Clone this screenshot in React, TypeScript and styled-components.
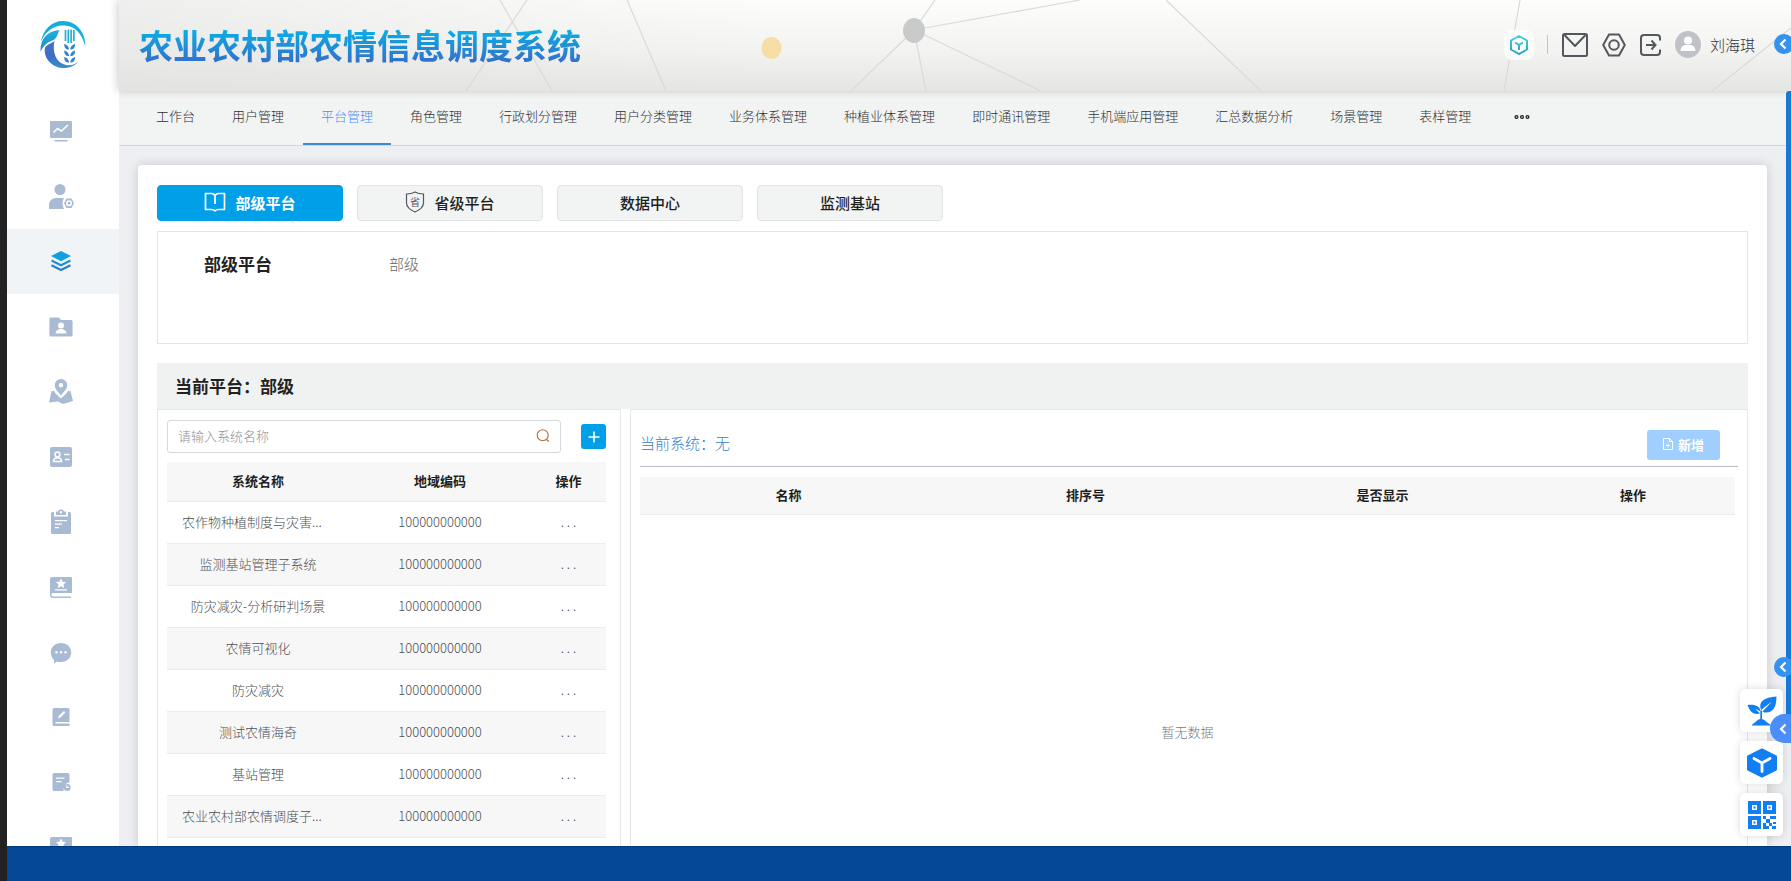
import React from "react";
import styled, { createGlobalStyle, css } from "styled-components";

const GlobalStyle = createGlobalStyle`
  *, *::before, *::after { box-sizing: border-box; }
  body {
    margin: 0;
    font-family: "Noto Sans CJK SC", "Liberation Sans", sans-serif;
    font-size: 13px;
    font-weight: 300;
    color: #303133;
    background: #eeeff2;
  }
  button, input { font-family: inherit; font-size: inherit; font-weight: inherit; }
  button { cursor: pointer; }
`;

const Shell = styled.div`
  position: relative;
  display: flex;
  flex-direction: column;
  height: 100vh;
  overflow: hidden;
  border-left: 7px solid #222;
`;

const Workspace = styled.div`
  display: flex;
  flex: 1;
  min-height: 0;
  overflow: hidden;
`;

const Footer = styled.footer`
  flex: none;
  height: 35px;
  background: #054797;
  border-top: 1px solid #023a80;
`;

/* ---------- sidebar ---------- */

const Sidebar = styled.aside`
  flex: none;
  width: 112px;
  background: #fff;
`;

const LogoBox = styled.div`
  display: flex;
  justify-content: center;
  height: 99px;
  padding-top: 20px;
`;

const SideLink = styled.a<{ $active?: boolean }>`
  display: flex;
  align-items: center;
  justify-content: center;
  height: 65px;
  padding-right: 4px;
  color: #a9bbd3;
  background: ${(p) => (p.$active ? "#f1f4f6" : "transparent")};
`;

/* ---------- header ---------- */

const Main = styled.main`
  display: flex;
  flex-direction: column;
  flex: 1;
  min-width: 0;
`;

const Header = styled.header`
  position: relative;
  display: flex;
  flex: none;
  align-items: center;
  justify-content: space-between;
  height: 91px;
  padding: 0 36px 2px 20px;
  background:
    linear-gradient(90deg, rgba(225, 225, 225, 0.5), rgba(255, 255, 255, 0) 40%),
    linear-gradient(180deg, #fdfdfc, #f3f3f1 55%, #e5e5e3);
  box-shadow: -2px 0 8px rgba(0, 0, 0, 0.18);
`;

const Network = styled.svg`
  position: absolute;
  inset: 0;
  width: 100%;
  height: 100%;
`;

const Title = styled.h1`
  position: relative;
  margin: 0;
  font-size: 34px;
  line-height: 48px;
  font-weight: 700;
  color: transparent;
  background: linear-gradient(180deg, #0cabe4 22%, #3272cc 84%);
  background-clip: text;
  -webkit-background-clip: text;
`;

const Tools = styled.div`
  position: relative;
  display: flex;
  align-items: center;
`;

const IconButton = styled.button`
  display: flex;
  align-items: center;
  justify-content: center;
  padding: 0;
  border: 0;
  background: none;
  color: #54585e;
`;

const CubeButton = styled(IconButton)`
  width: 30px;
  height: 30px;
  border-radius: 8px;
  background: rgba(255, 255, 255, 0.75);
`;

const Divider = styled.span`
  width: 1px;
  height: 19px;
  margin: 0 14px 0 13px;
  background: #c4c4c4;
`;

const ToolGroup = styled.div`
  display: flex;
  align-items: center;
  gap: 14px;
`;

const UserButton = styled(IconButton)`
  gap: 9px;
  font-size: 15px;
  line-height: 24px;
  color: #303133;
`;

/* ---------- navigation ---------- */

const Nav = styled.nav`
  display: flex;
  flex: none;
  gap: 1px;
  height: 55px;
  padding-left: 19px;
  background: #f2f4f4;
  border-bottom: 1px solid #d3d7df;
`;

const NavLink = styled.a<{ $active?: boolean }>`
  padding: 0 18px 2px;
  line-height: 50px;
  white-space: nowrap;
  text-decoration: none;
  color: ${(p) => (p.$active ? "#4a8ff0" : "#303133")};
  border-bottom: 2px solid ${(p) => (p.$active ? "#3c8ad6" : "transparent")};
`;

const MoreButton = styled(IconButton)`
  padding: 0 24px 2px;
  color: #222;
`;

/* ---------- content ---------- */

const Card = styled.section`
  display: flex;
  flex: 1;
  flex-direction: column;
  min-height: 0;
  margin: 19px 24px 0 19px;
  padding: 20px 19px 0;
  background: #fff;
  border-radius: 4px 4px 0 0;
  box-shadow: 0 0 12px rgba(0, 0, 0, 0.16);
`;

const Tabs = styled.div`
  display: flex;
  flex: none;
  gap: 14px;
`;

const TabButton = styled.button<{ $active?: boolean }>`
  display: flex;
  align-items: center;
  justify-content: center;
  gap: 9px;
  width: 186px;
  height: 36px;
  padding: 0 0 2px;
  border: 1px solid #e2e4e5;
  border-radius: 4px;
  font-size: 15px;
  font-weight: 500;
  color: #1d1f21;
  background: #f2f3f3;
  ${(p) =>
    p.$active &&
    css`
      border-color: #00a0e9;
      font-weight: 700;
      color: #fff;
      background: #00a0e9;
    `}
`;

const InfoBox = styled.div`
  display: flex;
  flex: none;
  gap: 117px;
  height: 113px;
  margin-top: 10px;
  padding: 19px 46px;
  line-height: 26px;
  border: 1px solid #e4e6e6;
`;

const InfoLabel = styled.strong`
  font-size: 17px;
  font-weight: 700;
  color: #222;
`;

const InfoValue = styled.span`
  font-size: 15px;
  color: #666;
`;

const SectionTitle = styled.h2`
  flex: none;
  margin: 19px 0 0;
  padding: 0 18px;
  font-size: 17px;
  line-height: 46px;
  font-weight: 700;
  color: #222;
  background: #f0f2f2;
`;

const Columns = styled.div`
  display: flex;
  flex: 1;
  gap: 9px;
  min-height: 0;
`;

const Panel = styled.div`
  border: 1px solid #e4e6e8;
  border-bottom: 0;
`;

const SystemPanel = styled(Panel)`
  flex: none;
  width: 464px;
  padding: 10px 14px 0 9px;
`;

const SearchRow = styled.form`
  display: flex;
  align-items: center;
  gap: 20px;
`;

const SearchField = styled.label`
  display: flex;
  align-items: center;
  width: 395px;
  height: 33px;
  padding: 0 10px 2px;
  border: 1px solid #d5d8de;
  border-radius: 3px;
`;

const SearchInput = styled.input`
  flex: 1;
  min-width: 0;
  padding: 0;
  border: 0;
  outline: 0;
  background: none;
  &::placeholder { color: #8e9197; opacity: 1; }
`;

const AddButton = styled(IconButton)`
  width: 25px;
  height: 25px;
  border-radius: 3px;
  color: #fff;
  background: #00a0e9;
`;

const Table = styled.table`
  width: 100%;
  table-layout: fixed;
  border-collapse: separate;
  border-spacing: 0;
  text-align: center;
`;

const HeadCell = styled.th<{ $height: number }>`
  height: ${(p) => p.$height}px;
  padding: 0 0 2px;
  font-weight: 700;
  color: #1d1f21;
  background: #f7f7f8;
  border-bottom: 1px solid #ebecef;
`;

const SystemTable = styled(Table)`
  margin-top: 9px;
`;

const Row = styled.tr`
  &:nth-child(even) { background: #f7f7f8; }
`;

const Cell = styled.td<{ $truncated?: boolean }>`
  height: 42px;
  padding: 0 15px 2px;
  color: #4c4f53;
  text-align: ${(p) => (p.$truncated ? "left" : "center")};
  white-space: nowrap;
  border-bottom: 1px solid #ebecef;
`;

const RowMenu = styled.button`
  padding: 0;
  border: 0;
  background: none;
  color: #4c4f53;
`;

const DetailPanel = styled(Panel)`
  flex: 1;
  min-width: 0;
  padding: 10px 9px 0;
`;

const DetailHead = styled.div`
  display: flex;
  align-items: center;
  justify-content: space-between;
  height: 47px;
  padding: 4px 18px 0 0;
  border-bottom: 1px solid #b9bdc6;
`;

const DetailTitle = styled.h3`
  margin: 0;
  padding-bottom: 4px;
  font-size: 15px;
  line-height: 24px;
  font-weight: 300;
  color: #2f80c8;
`;

const CreateButton = styled.button`
  display: flex;
  align-items: center;
  justify-content: center;
  gap: 5px;
  width: 73px;
  height: 30px;
  padding: 0 0 2px;
  border: 0;
  border-radius: 3px;
  font-weight: 700;
  color: #fff;
  background: #a0cfff;
`;

const DetailBody = styled.div`
  padding: 10px 3px 0 0;
`;

const Empty = styled.p`
  margin: 0;
  line-height: 434px;
  text-align: center;
  color: #77797e;
`;

/* ---------- floating widgets ---------- */

const ScrollRail = styled.div`
  position: absolute;
  top: 91px;
  right: 0;
  width: 5px;
  height: 640px;
  border-radius: 3px 0 0 0;
  background: #1778d8;
`;

const RoundToggle = styled(IconButton)<{ $top: number }>`
  position: absolute;
  top: ${(p) => p.$top}px;
  right: -3px;
  width: 20px;
  height: 20px;
  padding-right: 2px;
  border-radius: 50%;
  color: #fff;
  background: #3592f0;
`;

const DrawerToggle = styled(IconButton)`
  position: absolute;
  top: 714px;
  right: 0;
  width: 21px;
  height: 29px;
  padding-left: 4px;
  border-radius: 15px 0 0 15px;
  color: #fff;
  background: #4b8dfa;
`;

const FloatStack = styled.div`
  position: absolute;
  top: 689px;
  right: 8px;
  display: flex;
  flex-direction: column;
  gap: 9px;
`;

const FloatButton = styled(IconButton)`
  width: 43px;
  height: 43px;
  border-radius: 5px;
  color: #117ef4;
  background: #fff;
  box-shadow: 0 0 8px rgba(0, 0, 0, 0.14);
`;

/* ---------- drawings ---------- */

const Logo = () => (
  <svg width="48" height="50" viewBox="0 0 48 50" aria-label="农情">
    <defs>
      <linearGradient id="blade" x1="0" y1="0" x2="0" y2="1">
        <stop offset="0" stopColor="#18b2dc" />
        <stop offset="1" stopColor="#2a86cc" />
      </linearGradient>
      <linearGradient id="crescent" x1="0" y1="0" x2="0" y2="1">
        <stop offset="0" stopColor="#3f74cc" />
        <stop offset="0.600" stopColor="#3f6cc4" />
        <stop offset="1" stopColor="#3094cc" />
      </linearGradient>
      <linearGradient id="cube" x1="0" y1="0" x2="0" y2="1">
        <stop offset="0" stopColor="#3fd3e8" />
        <stop offset="1" stopColor="#1e9fc9" />
      </linearGradient>
    </defs>
    <path fill="#12b0da" d="M2 22C4 9 13 1 24 1c13 0 23 11 22.300 26C43 13 36 6 25 5.500 14 5 6 12 2 22z" />
    <path fill="url(#blade)" d="M1.500 32C1 19 8 11 20.500 10c-2 4-2.500 8-6 10C9 21.500 4 26 1.500 32z" />
    <path fill="url(#crescent)" d="M6 27.500c3-4 7-4 9.500-6.500C13 32 17 43 27 45c6 1 10-1 13-4-4 5-10 7.500-17 7C12 47 4 37 6 27.500z" />
    <path stroke="#2badd6" strokeWidth="1.700" d="M26.500 10v11M29.300 9.500V23M32.100 9.500V23M34.900 10v11" />
    <path
      fill="#2f84cc"
      d="M30 29.500c-3.500 0-4.800-2-4.800-5.500 3 1 4.800 2.500 4.800 5.500zM31.300 29.500c3.500 0 4.800-2 4.800-5.500-3 1-4.800 2.500-4.800 5.500zM30 36c-3.500 0-4.800-2-4.800-5.500 3 1 4.800 2.500 4.800 5.500zM31.300 36c3.500 0 4.800-2 4.800-5.500-3 1-4.800 2.500-4.800 5.500zM30 42.500c-3.500 0-4.800-2-4.800-5.500 3 1 4.800 2.500 4.800 5.500zM31.300 42.500c3.500 0 4.800-2 4.800-5.500-3 1-4.800 2.500-4.800 5.500z"
    />
  </svg>
);

const icon = (children: React.ReactNode) => (
  <svg width="26" height="26" viewBox="0 0 26 26" fill="currentColor" aria-hidden="true">
    {children}
  </svg>
);

const bookStar = icon(
  <>
    <path d="M4 3h19a1 1 0 0 1 1 1v15H5a1.700 1.700 0 0 0 0 3.400h18V24H5a3 3 0 0 1-3-3V5a2 2 0 0 1 2-2z" />
    <path fill="#fff" d="m13 4.500 1.600 3.200 3.400.4-2.500 2.400.7 3.400-3.200-1.700-3.200 1.700.7-3.400L8 8.100l3.400-.4zM7 15.200h12v1.300H7z" />
  </>
);

const sideItems = [
  {
    name: "工作台",
    art: icon(
      <>
        <path d="M3 2h20a1 1 0 0 1 1 1v15a1 1 0 0 1-1 1H3a1 1 0 0 1-1-1V3a1 1 0 0 1 1-1zM6.500 21h13v1.500h-13z" />
        <path fill="none" stroke="#fff" strokeWidth="1.600" strokeLinejoin="round" d="m5.500 13.500 4-4 4 2.500 6.500-6" />
      </>
    ),
  },
  {
    name: "用户管理",
    art: icon(
      <>
        <circle cx="12" cy="5.500" r="5.500" />
        <path d="M1 25v-4c0-4 3-7 7-7h8c-2 3-2 7 0 11z" />
        <path fillRule="evenodd" d="M18.500 14.500h5l2.500 4.700-2.500 4.800h-5L16 19.200zM21 16.200a3 3 0 1 0 0 6 3 3 0 0 0 0-6z" />
        <circle cx="21" cy="19.200" r="1.400" />
      </>
    ),
  },
  {
    name: "平台管理",
    active: true,
    art: icon(
      <>
        <path fill="#129fe0" d="m13 2 10 5-10 5.200L3 7z" />
        <path fill="none" stroke="#1d90d2" strokeWidth="2.200" d="m3.500 11.500 9.500 4.800 9.500-4.800" />
        <path fill="none" stroke="#2c7fc4" strokeWidth="2.200" d="m3.500 16.300 9.500 4.800 9.500-4.800" />
      </>
    ),
  },
  {
    name: "角色管理",
    art: icon(
      <>
        <path d="M3 3.500h8l2 2.500h10a1.600 1.600 0 0 1 1.600 1.600V21a1.600 1.600 0 0 1-1.600 1.600H3A1.600 1.600 0 0 1 1.400 21V5A1.500 1.500 0 0 1 3 3.500z" />
        <circle cx="13" cy="11.500" r="3" fill="#fff" />
        <path fill="#fff" d="M7.500 19.500c0-6 11-6 11 0z" />
      </>
    ),
  },
  {
    name: "行政划分管理",
    art: icon(
      <>
        <path fillRule="evenodd" d="M13 0a6.200 6.200 0 0 1 6.200 6.200c0 4.200-4.200 7.300-6.200 10.300-2-3-6.200-6.100-6.200-10.300A6.200 6.200 0 0 1 13 0zm0 4a2.200 2.200 0 1 0 0 4.400A2.200 2.200 0 0 0 13 4z" />
        <path d="M3.500 12H6c1.500 3 4 4.500 7 7.500 3-3 5.500-4.500 7-7.500h2.500L25 22l-10 3-5-2.500L1 23.500z" />
      </>
    ),
  },
  {
    name: "用户分类管理",
    art: icon(
      <>
        <rect x="2" y="3" width="22" height="20" rx="2" />
        <g fill="none" stroke="#fff" strokeWidth="1.500">
          <circle cx="9.500" cy="10.500" r="2.400" />
          <path d="M5.500 17.500c0-5 8-5 8 0zM16 10.500h5.500M17 15.500h4.500" />
        </g>
      </>
    ),
  },
  {
    name: "业务体系管理",
    art: icon(
      <>
        <path d="M4.500 3H6v4.500h14V3h1.500A1.500 1.500 0 0 1 23 4.500v19a1.500 1.500 0 0 1-1.500 1.500h-17A1.500 1.500 0 0 1 3 23.500v-19A1.500 1.500 0 0 1 4.500 3z" />
        <path fillRule="evenodd" d="M8 2.500h2c.5-1.500 1.500-2 3-2s2.500.5 3 2h2V6H8zM13 2a1.200 1.200 0 1 0 0 2.400A1.200 1.200 0 0 0 13 2z" />
        <path fill="#fff" d="M7 11h12v1.200H7zM7 14.500h7v1.200H7zM7 18h4v1.200H7z" />
      </>
    ),
  },
  { name: "种植业体系管理", art: bookStar },
  {
    name: "即时通讯管理",
    art: icon(
      <>
        <path d="M13 4c6 0 10.200 4 10.200 9.500S19 23 13 23c-1.500 0-3 0-4-.5L6 24.500V21C4 19.500 2.800 16.500 2.800 13.500 2.800 8 7 4 13 4z" />
        <g fill="#fff">
          <circle cx="8.500" cy="13.200" r="1.200" />
          <circle cx="13" cy="13.200" r="1.200" />
          <circle cx="17.500" cy="13.200" r="1.200" />
        </g>
      </>
    ),
  },
  {
    name: "手机端应用管理",
    art: icon(
      <>
        <path d="M6 4h14a1.500 1.500 0 0 1 1.500 1.500V18H7.500v1.500h14V22H6a1.500 1.500 0 0 1-1.500-1.500v-15A1.500 1.500 0 0 1 6 4z" />
        <path fill="#fff" d="m10 14.500 1-3 5-4.500 1.200 1.500-4.700 5z" />
      </>
    ),
  },
  {
    name: "汇总数据分析",
    art: icon(
      <>
        <path d="M6 4h14a1.500 1.500 0 0 1 1.500 1.500v8c-4 0-6 4-6 8.500H6a1.500 1.500 0 0 1-1.500-1.500v-15A1.500 1.500 0 0 1 6 4z" />
        <path fill="#fff" d="M8 8.500h8.500v1.300H8zM8 12h5.500v1.300H8z" />
        <path fillRule="evenodd" d="M19.200 15a3.500 3.500 0 1 1 0 7 3.500 3.500 0 0 1 0-7zm-1 1.500v2.600h3v-1.200h-1.700v-1.400z" />
      </>
    ),
  },
  { name: "场景管理", art: bookStar },
];

const ChevronLeft = () => (
  <svg width="8" height="12" viewBox="0 0 8 12" fill="none" stroke="currentColor" strokeWidth="2.200" aria-hidden="true">
    <path d="M6.500 1.500 2 6l4.500 4.500" />
  </svg>
);

const NetworkArt = () => (
  <Network viewBox="0 0 1672 91" preserveAspectRatio="none" aria-hidden="true">
    <path
      fill="none"
      stroke="#d9dada"
      strokeWidth="1.200"
      d="M381 0l52 91M408 0l-61 91M508 0l39 91M816 0l-21 30-63 61M795 30l12 61M795 30l127 61M795 30 961 0M1047 0l95 91M1401 0l-16 91M1672 28l-79 63"
    />
    <ellipse cx="652.500" cy="48" rx="10" ry="11" fill="#f5dda5" />
    <ellipse cx="795" cy="30.500" rx="11" ry="12.500" fill="#c9cbca" />
  </Network>
);

/* ---------- data ---------- */

const navItems = [
  "工作台", "用户管理", "平台管理", "角色管理", "行政划分管理", "用户分类管理", "业务体系管理",
  "种植业体系管理", "即时通讯管理", "手机端应用管理", "汇总数据分析", "场景管理", "表样管理",
];

const systems = [
  "农作物种植制度与灾害...",
  "监测基站管理子系统",
  "防灾减灾-分析研判场景",
  "农情可视化",
  "防灾减灾",
  "测试农情海奇",
  "基站管理",
  "农业农村部农情调度子...",
];

export default function App() {
  return (
    <>
      <GlobalStyle />
      <Shell>
        <Workspace>
          <Sidebar>
            <LogoBox>
              <Logo />
            </LogoBox>
            {sideItems.map((item) => (
              <SideLink key={item.name} href="#" aria-label={item.name} $active={item.active}>
                {item.art}
              </SideLink>
            ))}
          </Sidebar>

          <Main>
            <Header>
              <NetworkArt />
              <Title>农业农村部农情信息调度系统</Title>
              <Tools>
                <CubeButton aria-label="应用">
                  <svg width="20" height="20" viewBox="0 0 20 20" fill="none" stroke="url(#cube)" strokeWidth="2" strokeLinejoin="round">
                    <path d="m10 1 8 4.500v9L10 19l-8-4.500v-9zM10 15v-5L6 7.500M10 10l4-2.500" />
                  </svg>
                </CubeButton>
                <Divider />
                <ToolGroup>
                  <IconButton aria-label="消息">
                    <svg width="26" height="24" viewBox="0 0 26 24" fill="none" stroke="currentColor" strokeWidth="2" strokeLinejoin="round">
                      <rect x="1" y="1" width="24" height="22" rx="1.500" />
                      <path d="m2.500 2 10.500 11L23.500 2" />
                    </svg>
                  </IconButton>
                  <IconButton aria-label="设置">
                    <svg width="24" height="24" viewBox="0 0 24 24" fill="none" stroke="currentColor" strokeWidth="2" strokeLinejoin="round">
                      <path d="M7 1.500h10L22.800 12 17 22.500H7L1.200 12z" />
                      <circle cx="12" cy="12" r="4.800" />
                    </svg>
                  </IconButton>
                  <IconButton aria-label="退出">
                    <svg width="21" height="22" viewBox="0 0 21 22" fill="none" stroke="currentColor" strokeWidth="2">
                      <path d="M20 6.500V4a3 3 0 0 0-3-3H4a3 3 0 0 0-3 3v14a3 3 0 0 0 3 3h13a3 3 0 0 0 3-3v-2.500" />
                      <path d="M6 11h9M11.500 6.500l4 4.500-4 4.500" />
                    </svg>
                  </IconButton>
                  <UserButton>
                    <svg width="26" height="27" viewBox="0 0 26 27" aria-hidden="true">
                      <ellipse cx="13" cy="13.500" rx="13" ry="13.500" fill="#bfc2c8" />
                      <circle cx="13" cy="9.500" r="4" fill="#fff" />
                      <path fill="#fff" d="M5.500 20c0-4 3-6 5-6h5c2 0 5 2 5 6z" />
                    </svg>
                    刘海琪
                  </UserButton>
                </ToolGroup>
              </Tools>
            </Header>

            <Nav>
              {navItems.map((name) => (
                <NavLink key={name} href="#" $active={name === "平台管理"}>
                  {name}
                </NavLink>
              ))}
              <MoreButton aria-label="更多">
                <svg width="16" height="6" viewBox="0 0 16 6" fill="none" stroke="currentColor" strokeWidth="1.300">
                  <circle cx="2.500" cy="3" r="1.400" />
                  <circle cx="8" cy="3" r="1.400" />
                  <circle cx="13.500" cy="3" r="1.400" />
                </svg>
              </MoreButton>
            </Nav>

            <Card>
              <Tabs>
                <TabButton $active>
                  <svg width="22" height="20" viewBox="0 0 22 20" fill="none" stroke="currentColor" strokeWidth="1.700" strokeLinejoin="round" aria-hidden="true">
                    <path d="M11 3.500V12M11 3.500C10 2 9 1.500 7.500 1.500H1.500v16h6c1.500 0 2.500.3 3.500 1.300 1-1 2-1.300 3.500-1.300h6v-16h-6C13 1.500 12 2 11 3.500z" />
                  </svg>
                  部级平台
                </TabButton>
                <TabButton>
                  <svg width="20" height="22" viewBox="0 0 20 22" aria-hidden="true">
                    <path fill="none" stroke="#54585e" strokeWidth="1.200" d="M10 1c2.500 1.500 5.500 2 8.500 2v9c0 4-4 7-8.500 9-4.500-2-8.500-5-8.500-9V3c3 0 6-.5 8.500-2z" />
                    <text x="10" y="14.500" fontSize="10" fontWeight="400" textAnchor="middle" fill="#54585e">省</text>
                  </svg>
                  省级平台
                </TabButton>
                <TabButton>数据中心</TabButton>
                <TabButton>监测基站</TabButton>
              </Tabs>

              <InfoBox>
                <InfoLabel>部级平台</InfoLabel>
                <InfoValue>部级</InfoValue>
              </InfoBox>

              <SectionTitle>当前平台：部级</SectionTitle>

              <Columns>
                <SystemPanel>
                  <SearchRow>
                    <SearchField>
                      <SearchInput placeholder="请输入系统名称" aria-label="系统名称" />
                      <svg width="14" height="14" viewBox="0 0 14 14" fill="none" stroke="#b8693c" strokeWidth="1.100" aria-hidden="true">
                        <circle cx="6.700" cy="6.200" r="5.500" />
                        <path d="m10.500 10.500 2.300 2" />
                      </svg>
                    </SearchField>
                    <AddButton type="button" aria-label="添加系统">
                      <svg width="12" height="12" viewBox="0 0 12 12" stroke="currentColor" strokeWidth="1.600">
                        <path d="M6 .5v11M.5 6h11" />
                      </svg>
                    </AddButton>
                  </SearchRow>
                  <SystemTable>
                    <colgroup>
                      <col width="182" />
                      <col width="182" />
                      <col />
                    </colgroup>
                    <thead>
                      <tr>
                        <HeadCell $height={40}>系统名称</HeadCell>
                        <HeadCell $height={40}>地域编码</HeadCell>
                        <HeadCell $height={40}>操作</HeadCell>
                      </tr>
                    </thead>
                    <tbody>
                      {systems.map((name) => (
                        <Row key={name}>
                          <Cell $truncated={name.endsWith("...")}>{name}</Cell>
                          <Cell>100000000000</Cell>
                          <Cell>
                            <RowMenu aria-label="更多操作">. . .</RowMenu>
                          </Cell>
                        </Row>
                      ))}
                    </tbody>
                  </SystemTable>
                </SystemPanel>

                <DetailPanel>
                  <DetailHead>
                    <DetailTitle>当前系统：无</DetailTitle>
                    <CreateButton>
                      <svg width="10" height="12" viewBox="0 0 10 12" fill="none" stroke="currentColor" aria-hidden="true">
                        <path d="M6.500.5h-6v11h9V3.500zM6.500.5v3h3M5 5.500v4M3 7.500h4" />
                      </svg>
                      新增
                    </CreateButton>
                  </DetailHead>
                  <DetailBody>
                    <Table>
                      <colgroup>
                        <col width="297" />
                        <col width="297" />
                        <col width="297" />
                        <col />
                      </colgroup>
                      <thead>
                        <tr>
                          <HeadCell $height={38}>名称</HeadCell>
                          <HeadCell $height={38}>排序号</HeadCell>
                          <HeadCell $height={38}>是否显示</HeadCell>
                          <HeadCell $height={38}>操作</HeadCell>
                        </tr>
                      </thead>
                    </Table>
                    <Empty>暂无数据</Empty>
                  </DetailBody>
                </DetailPanel>
              </Columns>
            </Card>
          </Main>
        </Workspace>
        <Footer />

        <ScrollRail />
        <RoundToggle $top={34} aria-label="展开">
          <ChevronLeft />
        </RoundToggle>
        <RoundToggle $top={657} aria-label="展开">
          <ChevronLeft />
        </RoundToggle>
        <FloatStack>
          <FloatButton aria-label="农情">
            <svg width="30" height="30" viewBox="0 0 30 30" fill="currentColor">
              <path d="M29.500.5c0 11-4 16-10 16-1.500 0-3 0-4-1L25 5.500 14 14C11 6 17 1 29.500.5z" />
              <path d="M.5 9C8 8 13 10 13.500 15.500L8 12.500l5 5C6 19 3 16 .5 9z" />
              <path d="M13.300 14.500h1.700v9h-1.700z" />
              <path d="M4.500 29.500c1.500-2 2.500-2.500 4-3.500 2-2 3-3 5.500-3s3.500 1 5.500 3c1.500 1 3 1.500 4.500 3.500z" />
            </svg>
          </FloatButton>
          <FloatButton aria-label="应用">
            <svg width="30" height="30" viewBox="0 0 30 30">
              <path fill="currentColor" stroke="currentColor" strokeWidth="2" strokeLinejoin="round" d="m15 1.500 14 7v13l-14 7-14-7v-13z" />
              <path fill="none" stroke="#fff" strokeWidth="2.800" strokeLinecap="round" d="M15 23.500V15L7 10.500M15 15l8-4.500" />
            </svg>
          </FloatButton>
          <FloatButton aria-label="二维码">
            <svg width="28" height="28" viewBox="0 0 28 28" fill="currentColor">
              <path fillRule="evenodd" d="M0 0h13v13H0zM4 4v5h5V4zM15 0h13v13H15zM19 4v5h5V4zM0 15h13v13H0zM4 19v5h5v-5z" />
              <path d="M5.500 5.500h2v2h-2zM20.500 5.500h2v2h-2zM5.500 20.500h2v2h-2zM15 15h3v3h-3zM25 15h3v3h-3zM18 18h4v4h-4zM15 22h3v3h3v3h-6zM22 15h3v3h-3zM21 22h3v3h-3zM25 21h3v2h-3zM24 25h4v3h-4z" />
            </svg>
          </FloatButton>
        </FloatStack>
        <DrawerToggle aria-label="展开抽屉">
          <ChevronLeft />
        </DrawerToggle>
      </Shell>
    </>
  );
}
